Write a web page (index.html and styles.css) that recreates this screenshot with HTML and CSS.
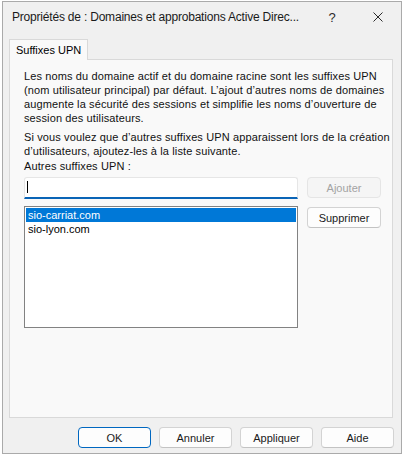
FILE: index.html
```html
<!DOCTYPE html>
<html lang="fr">
<head>
<meta charset="utf-8">
<title>Propriétés</title>
<link rel="stylesheet" href="styles.css">
</head>
<body>
<div class="window">
  <div class="titlebar">
    <span class="title">Propriétés de : Domaines et approbations Active Direc...</span>
    <span class="tb-btn help">?</span>
    <span class="tb-btn close">
      <svg width="10" height="10" viewBox="0 0 10 10"><path d="M0.5 0.5 L9.5 9.5 M9.5 0.5 L0.5 9.5" stroke="#2b2b2b" stroke-width="1" fill="none"/></svg>
    </span>
  </div>
  <div class="body">
    <div class="tabs"><div class="tab">Suffixes UPN</div></div>
    <div class="panel">
      <p class="para">Les noms du domaine actif et du domaine racine sont les suffixes UPN<br>(nom utilisateur principal) par défaut. L’ajout d’autres noms de domaines<br>augmente la sécurité des sessions et simplifie les noms d’ouverture de<br>session des utilisateurs.</p>
      <p class="para para2">Si vous voulez que d’autres suffixes UPN apparaissent lors de la création<br>d’utilisateurs, ajoutez-les à la liste suivante.</p>
      <div class="label">Autres suffixes UPN :</div>
      <div class="row">
        <div class="input"><span class="caret"></span></div>
        <button class="btn disabled" disabled>Ajouter</button>
      </div>
      <div class="row row2">
        <div class="list">
          <div class="item selected">sio-carriat.com</div>
          <div class="item">sio-lyon.com</div>
        </div>
        <button class="btn side">Supprimer</button>
      </div>
    </div>
    <div class="actions">
      <button class="btn default">OK</button>
      <button class="btn">Annuler</button>
      <button class="btn">Appliquer</button>
      <button class="btn">Aide</button>
    </div>
  </div>
</div>
</body>
</html>
```
FILE: styles.css
```css
* { box-sizing: border-box; }
html, body { margin: 0; padding: 0; background: #ffffff; }
body {
  font-family: "Liberation Sans", Arial, sans-serif;
  font-size: 11px;
  color: #000;
}
.window {
  margin: 1px 0 0 2px;
  width: 400px;
  height: 453px;
  border: 1px solid #aaaaaa;
  background: #f0f0f0;
  display: flex;
  flex-direction: column;
}
.titlebar {
  height: 30px;
  display: flex;
  align-items: center;
  padding-left: 9px;
  flex: none;
}
.title {
  flex: 1;
  font-size: 12px;
  letter-spacing: -0.2px;
  color: #1a1a1a;
  white-space: nowrap;
}
.tb-btn {
  width: 46px;
  height: 30px;
  display: flex;
  align-items: center;
  justify-content: center;
}
.help { font-size: 13px; color: #2b2b2b; padding-top: 1px; }
.body {
  flex: 1;
  display: flex;
  flex-direction: column;
  padding: 7px 7px 5px 6px;
}
.tabs { display: flex; height: 20px; }
.tab {
  width: 79px;
  height: 21px;
  border: 1px solid #d9d9d9;
  border-bottom: none;
  background: #f9f9f9;
  padding: 3px 0 0 6px;
  line-height: 14px;
  position: relative;
  z-index: 1;
}
.panel {
  width: 384px;
  height: 359px;
  border: 1px solid #d9d9d9;
  background: #f9f9f9;
  padding: 9px 11px 0 14px;
}
.para {
  margin: 0 0 5px 0;
  line-height: 14px;
  letter-spacing: 0.12px;
  white-space: nowrap;
  color: #111;
}
.para2 { margin-bottom: 1px; }
.label { line-height: 14px; margin-bottom: 4px; letter-spacing: 0.12px; color: #111; }
.row { display: flex; gap: 9px; align-items: flex-start; }
.row2 { margin-top: 7px; }
.input {
  width: 274px;
  height: 22px;
  background: #ffffff;
  border: 1px solid #e6e6e6;
  border-bottom: 2px solid #0a64b6;
  border-radius: 3px 3px 0 0;
  padding: 3px 0 0 2px;
}
.caret {
  display: block;
  width: 1px;
  height: 12px;
  background: #000;
}
.btn {
  font-family: inherit;
  font-size: 11px;
  color: #1a1a1a;
  width: 74px;
  height: 21px;
  padding: 0;
  background: #fdfdfd;
  border: 1px solid #d3d3d3;
  border-bottom-color: #c3c3c3;
  border-radius: 4px;
}
.btn.disabled {
  background: #f5f5f5;
  border-color: #e5e5e5;
  color: #a3a3a3;
}
.btn.side { margin-top: 1px; }
.list {
  width: 274px;
  height: 122px;
  background: #ffffff;
  border: 1px solid #828282;
  padding: 1px;
}
.item {
  height: 14px;
  line-height: 14px;
  padding-left: 2px;
}
.item.selected { background: #0078d7; color: #ffffff; }
.actions {
  display: flex;
  justify-content: flex-end;
  gap: 8px;
  margin-top: 9px;
}
.actions .btn { width: 73px; }
.btn.default { border: 1px solid #0067c0; }
```
